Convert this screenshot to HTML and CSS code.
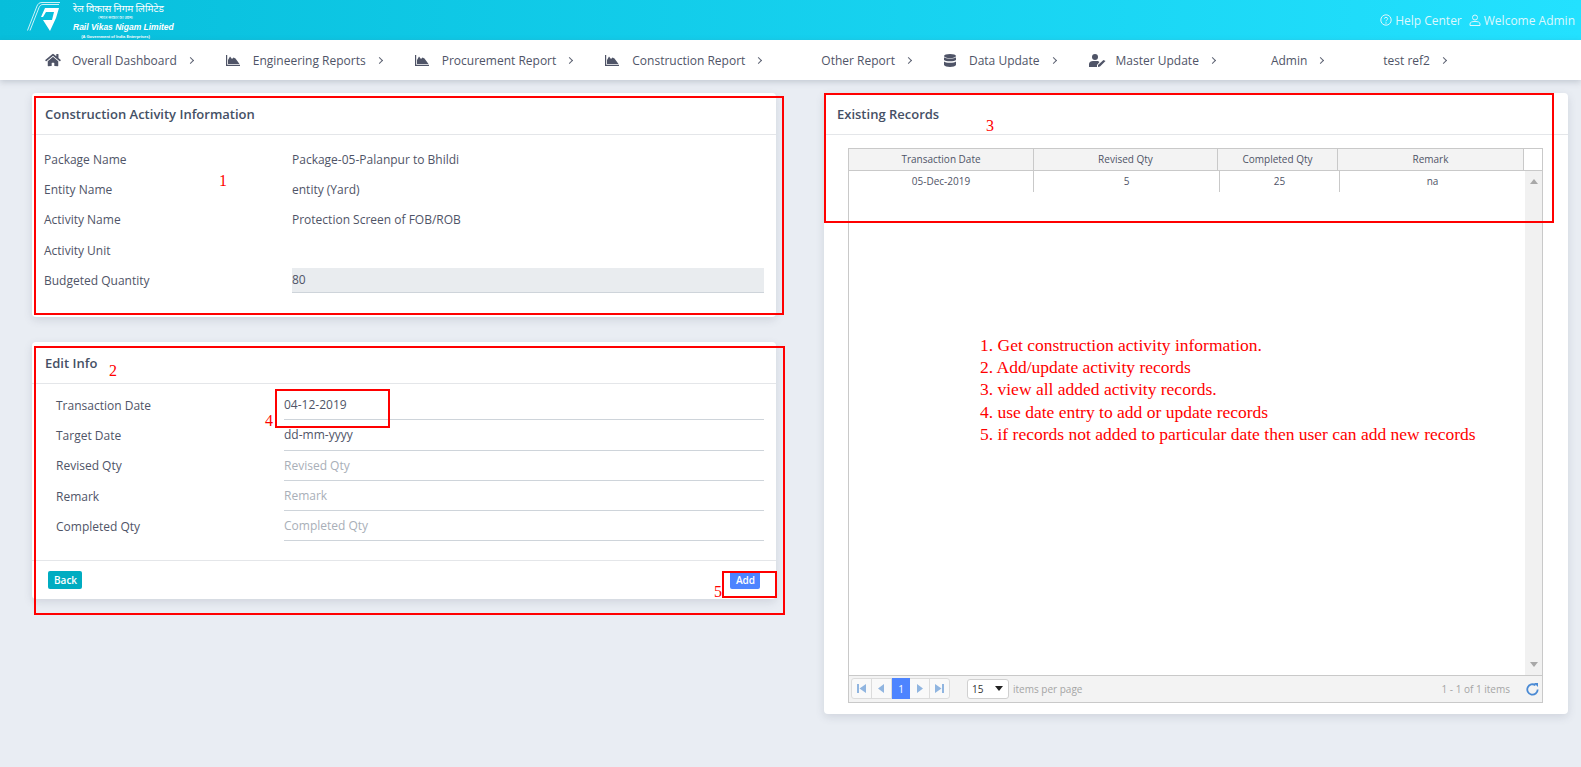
FILE: index.html
```html
<!DOCTYPE html>
<html>
<head>
    <meta charset="utf-8">
    <title>Construction Activity</title>
    <link rel="stylesheet" href="styles.css">
</head>
<body>
<header class="topbar">
    <div class="logo">
        <svg class="logo-mark" viewBox="0 0 34 30" width="34" height="30">
            <path d="M33 .5H15C12 .5 11 2 10 4L.5 28.5" fill="none" stroke="#fff" stroke-width=".8"/>
            <path d="M32 2.5H16C14 2.5 13 3.500 12 5.500L3 28.500" fill="none" stroke="#fff" stroke-width=".8"/>
            <path d="M18 6H32L29 16L23 29L16 18H25L27 10H19L16 15H14Z" fill="#fff"/>
        </svg>
        <div class="logo-text">
            <div class="logo-hi">रेल विकास निगम लिमिटेड</div>
            <div class="logo-hi-sub">(भारत सरकार का उद्यम)</div>
            <div class="logo-en">Rail Vikas Nigam Limited</div>
            <div class="logo-en-sub">(A Government of India Enterprises)</div>
        </div>
    </div>
    <div class="top-links">
        <svg width="12" height="12" viewBox="0 0 12 12"><circle cx="6" cy="6" r="5.200" fill="none" stroke="currentColor"/><path d="M4.300 4.700C4.300 2.900 7.700 2.900 7.700 4.700C7.700 6 6 5.800 6 7.300" fill="none" stroke="currentColor"/><circle cx="6" cy="9" r=".7" fill="currentColor"/></svg>
        <span class="top-link">Help Center</span>
        <svg class="top-user" width="12" height="12" viewBox="0 0 12 12"><circle cx="6" cy="3.500" r="2.500" fill="none" stroke="currentColor"/><path d="M1 11.500V10C1 8 3 7.500 6 7.500S11 8 11 10V11.500Z" fill="none" stroke="currentColor"/></svg>
        <span class="top-link">Welcome Admin</span>
    </div>
</header>

<nav class="menu">
    <a class="menu-item"><span class="menu-icon"><svg width="16" height="14" viewBox="0 0 576 512"><path d="M280.370 148.260L96 300.110V464a16 16 0 0 0 16 16l112.060-.29a16 16 0 0 0 15.920-16V368a16 16 0 0 1 16-16h64a16 16 0 0 1 16 16v95.640a16 16 0 0 0 16 16.050L464 480a16 16 0 0 0 16-16V300L295.670 148.260a12.190 12.190 0 0 0-15.300 0zM571.600 251.470L488 182.560V44.050a12 12 0 0 0-12-12h-56a12 12 0 0 0-12 12v72.610L318.470 43a48 48 0 0 0-61 0L4.340 251.470a12 12 0 0 0-1.600 16.900l25.500 31A12 12 0 0 0 45.150 301l235.220-193.740a12.190 12.190 0 0 1 15.300 0L530.900 301a12 12 0 0 0 16.900-1.600l25.500-31a12 12 0 0 0-1.700-16.930z"/></svg></span>Overall Dashboard<i class="chev"></i></a>
    <a class="menu-item"><span class="menu-icon"><svg width="14" height="11" viewBox="0 0 14 11"><path d="M0 0H1.200V9.800H14V11H0Z"/><path d="M2 9V5L4 1.500L6 4L7.500 2.500L9.500 3.500L13.500 9Z"/></svg></span>Engineering Reports<i class="chev"></i></a>
    <a class="menu-item"><span class="menu-icon"><svg width="14" height="11" viewBox="0 0 14 11"><path d="M0 0H1.200V9.800H14V11H0Z"/><path d="M2 9V5L4 1.500L6 4L7.500 2.500L9.500 3.500L13.500 9Z"/></svg></span>Procurement Report<i class="chev"></i></a>
    <a class="menu-item"><span class="menu-icon"><svg width="14" height="11" viewBox="0 0 14 11"><path d="M0 0H1.200V9.800H14V11H0Z"/><path d="M2 9V5L4 1.500L6 4L7.500 2.500L9.500 3.500L13.500 9Z"/></svg></span>Construction Report<i class="chev"></i></a>
    <a class="menu-item"><span class="menu-icon"></span>Other Report<i class="chev"></i></a>
    <a class="menu-item"><span class="menu-icon menu-icon-db"><svg width="12" height="13" viewBox="0 0 12 13"><ellipse cx="6" cy="2" rx="6" ry="2"/><path d="M0 3.300C1 5 11 5 12 3.300V6C11 7.800 1 7.800 0 6Z"/><path d="M0 7.500C1 9.200 11 9.200 12 7.500V11C11 13.500 1 13.500 0 11Z"/></svg></span>Data Update<i class="chev"></i></a>
    <a class="menu-item"><span class="menu-icon"><svg width="17" height="13" viewBox="0 0 17 13"><circle cx="6" cy="3" r="3"/><path d="M0 13V10C0 8 2 7 4 7H8C9 7 10 7.500 10.500 8L8 11V13Z"/><path d="M9 11L14.500 6L16.500 7L11 12.500L9 13Z"/></svg></span>Master Update<i class="chev"></i></a>
    <a class="menu-item"><span class="menu-icon menu-icon-admin"></span>Admin<i class="chev"></i></a>
    <a class="menu-item"><span class="menu-icon"></span>test ref2<i class="chev"></i></a>
</nav>

<main class="content">
    <div class="column">
        <section class="card card-info">
            <div class="card-head"><h4>Construction Activity Information</h4></div>
            <div class="info-body">
                <div class="row"><label>Package Name</label><span>Package-05-Palanpur to Bhildi</span></div>
                <div class="row"><label>Entity Name</label><span>entity (Yard)</span></div>
                <div class="row"><label>Activity Name</label><span>Protection Screen of FOB/ROB</span></div>
                <div class="row"><label>Activity Unit</label><span></span></div>
                <div class="row"><label>Budgeted Quantity</label><input class="input-off" type="text" value="80" readonly></div>
            </div>
        </section>

        <section class="card card-edit">
            <div class="card-head"><h4>Edit Info</h4></div>
            <div class="edit-body">
                <div class="row"><label>Transaction Date</label><input type="text" value="04-12-2019"></div>
                <div class="row"><label>Target Date</label><input type="text" value="dd-mm-yyyy"></div>
                <div class="row"><label>Revised Qty</label><input type="text" placeholder="Revised Qty"></div>
                <div class="row"><label>Remark</label><input type="text" placeholder="Remark"></div>
                <div class="row"><label>Completed Qty</label><input type="text" placeholder="Completed Qty"></div>
            </div>
            <div class="card-foot">
                <button class="btn btn-back">Back</button>
                <button class="btn btn-add">Add</button>
            </div>
        </section>
    </div>

    <div class="column">
        <section class="card card-records">
            <div class="card-head"><h4>Existing Records</h4></div>
            <div class="grid-wrap">
                <div class="grid">
                    <div class="grid-head">
                        <div>Transaction Date</div>
                        <div>Revised Qty</div>
                        <div>Completed Qty</div>
                        <div>Remark</div>
                    </div>
                    <div class="grid-body">
                        <div class="grid-rows">
                            <div class="grid-row">
                                <div>05-Dec-2019</div>
                                <div>5</div>
                                <div>25</div>
                                <div>na</div>
                            </div>
                        </div>
                        <div class="scrollbar"><i class="arrow-up"></i><i class="arrow-down"></i></div>
                    </div>
                    <div class="pager">
                        <div class="pager-btns">
                            <a class="pg"><svg width="9" height="9" viewBox="0 0 9 9"><path d="M0 0H2V9H0ZM9 0V9L2.500 4.500Z"/></svg></a>
                            <a class="pg"><svg width="6" height="9" viewBox="0 0 6 9"><path d="M6 0V9L0 4.500Z"/></svg></a>
                            <a class="pg pg-on">1</a>
                            <a class="pg"><svg width="6" height="9" viewBox="0 0 6 9"><path d="M0 0V9L6 4.500Z"/></svg></a>
                            <a class="pg"><svg width="9" height="9" viewBox="0 0 9 9"><path d="M0 0V9L6.500 4.500ZM7 0H9V9H7Z"/></svg></a>
                        </div>
                        <div class="page-size"><span>15</span><i class="caret"></i></div>
                        <span class="pager-note">items per page</span>
                        <span class="pager-info">1 - 1 of 1 items</span>
                        <svg class="refresh" width="13" height="13" viewBox="0 0 13 13"><path d="M9.500 2.200A5.200 5.200 0 1 0 11.700 6.500" fill="none" stroke="#4a8ad4" stroke-width="1.800"/><path d="M8 0H12V4Z" fill="#4a8ad4"/></svg>
                    </div>
                </div>
            </div>
        </section>
    </div>
</main>

<!-- annotations drawn on top of the screenshot -->
<div class="mark mark-1"></div>
<div class="mark mark-2"></div>
<div class="mark mark-3"></div>
<div class="mark mark-4"></div>
<div class="mark mark-5"></div>
<span class="num num-1">1</span>
<span class="num num-2">2</span>
<span class="num num-3">3</span>
<span class="num num-4">4</span>
<span class="num num-5">5</span>
<ol class="notes">
    <li>1. Get construction activity information.</li>
    <li>2. Add/update activity records</li>
    <li>3. view all added activity records.</li>
    <li>4. use date entry to add or update records</li>
    <li>5. if records not added to particular date then user can add new records</li>
</ol>
</body>
</html>
```

FILE: styles.css
```css
* {
    box-sizing: border-box;
}

body {
    margin: 0;
    height: 767px;
    overflow: hidden;
    position: relative;
    background: #e9edf3;
    font-family: "Open Sans", "Noto Sans", sans-serif;
    font-size: 12px;
    color: #4f5467;
}

.topbar {
    height: 40px;
    display: flex;
    align-items: center;
    justify-content: space-between;
    padding: 0 6px 0 27px;
    background: linear-gradient(to right, #07bedb, #23e1ff);
}

.logo {
    display: flex;
    color: #fff;
}

.logo-mark {
    margin-top: 1px;
}

.logo-text {
    margin-left: 12px;
    text-align: center;
    width: 85px;
}

.logo-hi {
    font-family: "Noto Sans CJK SC", "Noto Sans", sans-serif;
    font-size: 10px;
    line-height: 14px;
    white-space: nowrap;
}

.logo-hi-sub {
    font-size: 4px;
    line-height: 6px;
    white-space: nowrap;
}

.logo-en {
    font-family: "Liberation Sans", sans-serif;
    font-size: 8.500px;
    font-weight: bold;
    font-style: italic;
    line-height: 12px;
    white-space: nowrap;
}

.logo-en-sub {
    font-family: "Liberation Sans", sans-serif;
    font-size: 4px;
    font-weight: bold;
    line-height: 7px;
    white-space: nowrap;
}

.top-links {
    display: flex;
    align-items: center;
    color: #dcf7fd;
    font-size: 12px;
}

.top-link {
    margin-left: 3px;
}

.top-user {
    margin-left: 7px;
}

.menu {
    height: 40px;
    display: flex;
    align-items: center;
    gap: 33px;
    padding-left: 45px;
    background: #fff;
    box-shadow: 0 2px 6px rgba(80, 90, 110, 0.25);
    position: relative;
}

.menu-item {
    display: flex;
    align-items: center;
    white-space: nowrap;
}

.menu-icon {
    width: 27px;
    display: flex;
    align-items: center;
}

.menu-icon svg {
    fill: #4f5467;
}

.menu-icon-db {
    width: 25px;
}

.menu-icon-admin {
    width: 23px;
}

.chev {
    width: 5px;
    height: 5px;
    margin-left: 11px;
    border-top: 1px solid #5d6272;
    border-right: 1px solid #5d6272;
    transform: rotate(45deg);
}

.content {
    display: grid;
    grid-template-columns: 744px 744px;
    gap: 48px;
    padding: 13px 0 0 32px;
}

.column {
    display: flex;
    flex-direction: column;
    gap: 25px;
}

.card {
    background: #fff;
    border-radius: 4px;
    box-shadow: 0 3px 8px rgba(80, 90, 110, 0.16);
}

.card-head {
    height: 42px;
    padding: 12px 13px 0;
    border-bottom: 1px solid #e4e6e9;
}

.card-head h4 {
    margin: 0;
    font-size: 13px;
    line-height: 18px;
    font-weight: 600;
    color: #455065;
}

.card-info {
    height: 224px;
}

.info-body {
    padding: 9px 12px 0;
}

.row {
    height: 30.300px;
    display: flex;
    align-items: center;
}

.row label {
    flex: none;
    width: 248px;
}

.row input {
    flex: 1;
    min-width: 0;
    height: 100%;
    padding: 0;
    border: 0;
    border-bottom: 1px solid #ced4da;
    background: none;
    font: inherit;
    color: inherit;
    outline: none;
}

.row input::placeholder {
    color: #a9afb8;
    opacity: 1;
}

.row .input-off {
    flex: none;
    width: 472px;
    height: 25px;
    background: #e9ecef;
}

.card-edit {
    height: 257px;
}

.edit-body {
    height: 177px;
    padding: 6px 12px 0 24px;
    border-bottom: 1px solid #e4e6e9;
}

.edit-body label {
    width: 228px;
}

.card-foot {
    display: flex;
    justify-content: space-between;
    padding: 10px 16px 0;
}

.btn {
    height: 18px;
    padding: 0 6px;
    border: 0;
    border-radius: 2px;
    color: #fff;
    font: 600 10px "Open Sans", sans-serif;
}

.btn-back {
    width: 34px;
    background: #00acc1;
}

.btn-add {
    width: 30px;
    background: #4d84ff;
}

.card-records {
    height: 621px;
}

.grid-wrap {
    padding: 13px 25px 11px 24px;
    height: 579px;
}

.grid {
    height: 100%;
    display: flex;
    flex-direction: column;
    border: 1px solid #c9c9c9;
    font-size: 10px;
}

.grid-head {
    flex: none;
    height: 22px;
    display: grid;
    grid-template-columns: 185px 184px 120px 186px;
    background: #fff;
    border-bottom: 1px solid #c9c9c9;
}

.grid-head div {
    background: #f3f3f3;
    border-right: 1px solid #c9c9c9;
    text-align: center;
    line-height: 21px;
}

.grid-body {
    flex: 1;
    display: flex;
    min-height: 0;
}

.grid-rows {
    flex: 1;
}

.grid-row {
    height: 21px;
    display: grid;
    grid-template-columns: 185px 186px 120px 1fr;
}

.grid-row div {
    text-align: center;
    line-height: 20px;
    border-right: 1px solid #c9c9c9;
}

.grid-row div:last-child {
    border-right: 0;
}

.scrollbar {
    flex: none;
    width: 17px;
    background: #f1f1f1;
    display: flex;
    flex-direction: column;
    justify-content: space-between;
    align-items: center;
    padding: 8px 0;
}

.arrow-up {
    border: 4px solid transparent;
    border-top: 0;
    border-bottom: 5px solid #a8a8a8;
}

.arrow-down {
    border: 4px solid transparent;
    border-bottom: 0;
    border-top: 5px solid #a8a8a8;
}

.pager {
    flex: none;
    height: 27px;
    display: flex;
    align-items: center;
    padding: 0 3px 1px 2px;
    background: #f3f3f3;
    border-top: 1px solid #c9c9c9;
}

.pager-btns {
    display: flex;
    height: 21px;
    width: 99px;
    background: #f9f9f9;
    border: 1px solid #dcdcdc;
    border-radius: 3px;
}

.pg {
    flex: 1;
    display: flex;
    align-items: center;
    justify-content: center;
    border-right: 1px solid #dcdcdc;
    fill: #90b5e0;
}

.pg:last-child {
    border-right: 0;
}

.pg-on {
    margin: -1px 0;
    background: #4d84ff;
    border-right: 0;
    color: #fff;
}

.page-size {
    width: 42px;
    height: 20px;
    margin-left: 17px;
    padding: 0 5px 0 4px;
    display: flex;
    align-items: center;
    justify-content: space-between;
    background: #fff;
    border: 1px solid #d0d0d0;
    border-radius: 3px;
    color: #333;
}

.caret {
    border: 4px solid transparent;
    border-bottom: 0;
    border-top: 5px solid #222;
}

.pager-note {
    margin-left: 4px;
    color: #a5a5a5;
}

.pager-info {
    margin-left: auto;
    color: #a5a5a5;
}

.refresh {
    margin-left: 16px;
    margin-top: 2px;
}

/* red notes */
.mark {
    position: absolute;
    border: 2px solid #f00;
}

.mark-1 {
    left: 34px;
    top: 96px;
    width: 750px;
    height: 219px;
}

.mark-2 {
    left: 34px;
    top: 346px;
    width: 751px;
    height: 269px;
}

.mark-3 {
    left: 824px;
    top: 93px;
    width: 730px;
    height: 130px;
}

.mark-4 {
    left: 275px;
    top: 389px;
    width: 115px;
    height: 39px;
}

.mark-5 {
    left: 722px;
    top: 571px;
    width: 55px;
    height: 27px;
}

.num {
    position: absolute;
    font: 16px/18px "Liberation Serif", serif;
    color: #f00;
}

.num-1 {
    left: 219px;
    top: 172px;
}

.num-2 {
    left: 109px;
    top: 362px;
}

.num-3 {
    left: 986px;
    top: 117px;
}

.num-4 {
    left: 265px;
    top: 412px;
}

.num-5 {
    left: 714px;
    top: 583px;
}

.notes {
    position: absolute;
    left: 980px;
    top: 334px;
    margin: 0;
    padding: 0;
    list-style: none;
    font: 17.500px/22.200px "Liberation Serif", serif;
    color: #f00;
    white-space: nowrap;
}
```
